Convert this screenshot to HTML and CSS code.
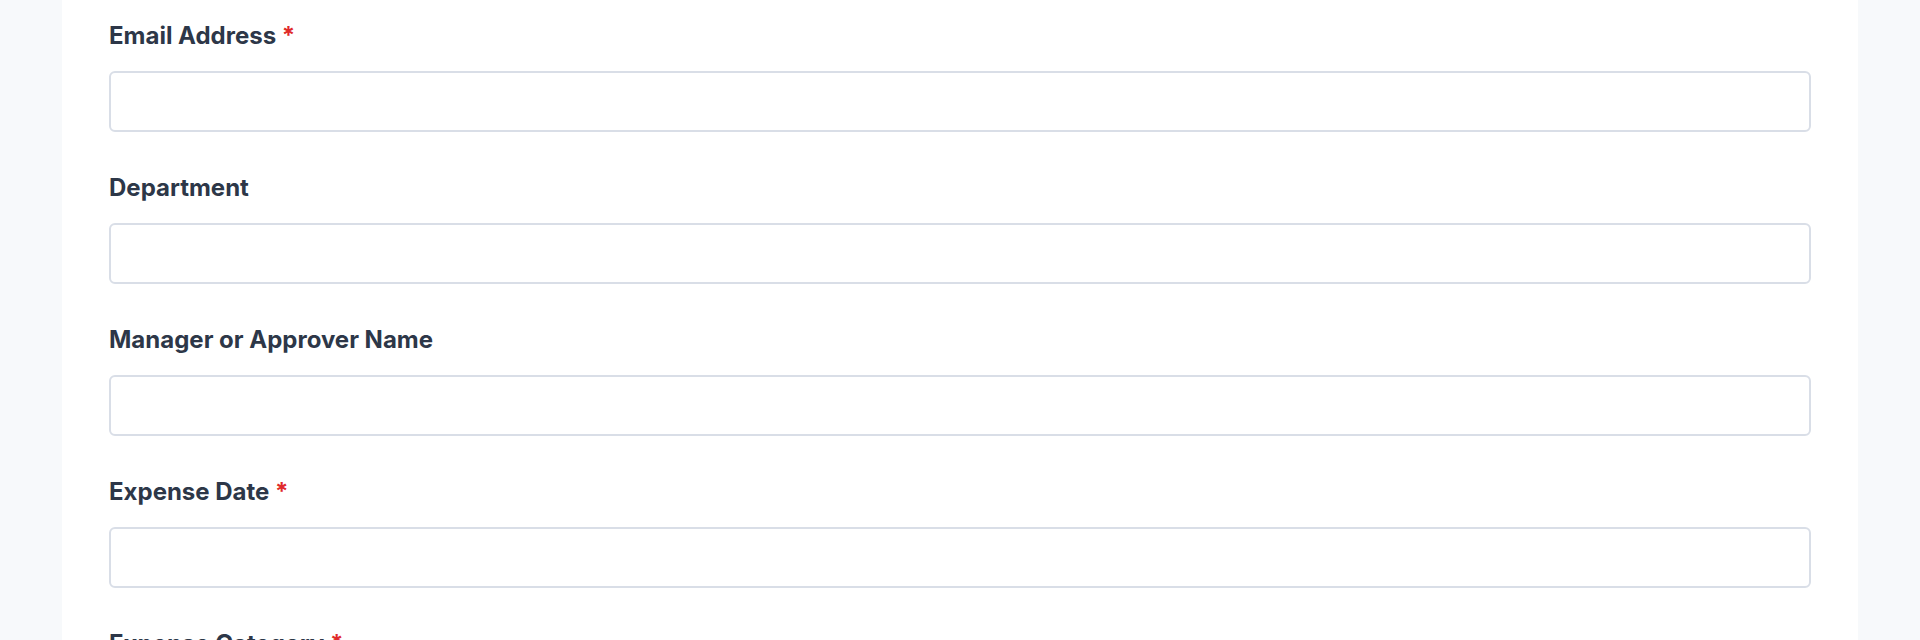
FILE: index.html
```html
<!DOCTYPE html>
<html lang="en">
<head>
    <meta charset="UTF-8" />
    <meta name="viewport" content="width=device-width, initial-scale=1.0"/>
    <title>Expense Reimbursement Form</title>
    <link rel="stylesheet" href="styles.css">
</head>
<body>
    <div class="page">
        <form class="form-card">
            <div class="field">
                <label for="email" class="field-label">Email Address <span class="required">*</span></label>
                <input type="email" id="email" name="email" class="field-input">
            </div>
            <div class="field">
                <label for="department" class="field-label">Department</label>
                <input type="text" id="department" name="department" class="field-input">
            </div>
            <div class="field">
                <label for="manager" class="field-label">Manager or Approver Name</label>
                <input type="text" id="manager" name="manager" class="field-input">
            </div>
            <div class="field">
                <label for="expenseDate" class="field-label">Expense Date <span class="required">*</span></label>
                <input type="text" id="expenseDate" name="expenseDate" class="field-input">
            </div>
            <div class="field">
                <label for="category" class="field-label">Expense Category <span class="required">*</span></label>
                <input type="text" id="category" name="category" class="field-input">
            </div>
        </form>
    </div>
</body>
</html>
```

FILE: styles.css
```css
body {
    margin: 0;
    background-color: #f7f9fb;
    font-family: Inter, "Liberation Sans", Arial, sans-serif;
    color: #2d3748;
}

.page {
    display: flex;
    justify-content: center;
}

.form-card {
    width: 1796px;
    background-color: #fff;
    padding: 20px 47px 40px 47px;
    box-sizing: border-box;
}

.field {
    margin-bottom: 40px;
}

.field-label {
    display: block;
    font-size: 24px;
    font-weight: 700;
    line-height: 32px;
    margin-bottom: 19px;
}

.required {
    color: #e02a2a;
}

.field-input {
    display: block;
    width: 100%;
    height: 61px;
    border: 2px solid #d9dee7;
    border-radius: 6px;
    box-sizing: border-box;
    font-size: 20px;
    padding: 0 16px;
    background-color: #fff;
}
```
